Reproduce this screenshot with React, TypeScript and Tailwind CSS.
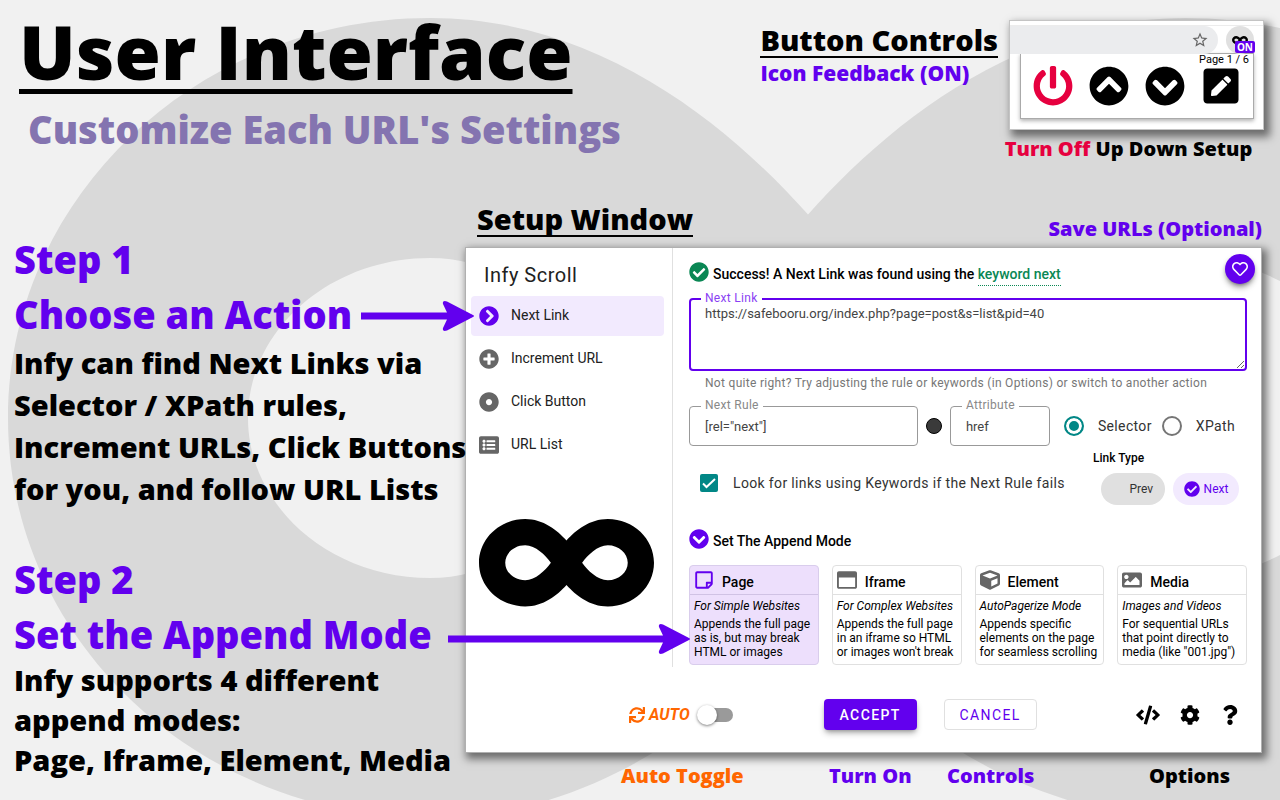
import type { ReactNode } from "react";
import {
  FaCheckCircle,
  FaChevronCircleDown,
  FaChevronCircleRight,
  FaChevronCircleUp,
  FaCode,
  FaCog,
  FaCube,
  FaDotCircle,
  FaImage,
  FaInfinity,
  FaListAlt,
  FaPenSquare,
  FaPlusCircle,
  FaPowerOff,
  FaQuestion,
  FaRegHeart,
  FaRegStickyNote,
  FaRegWindowMaximize,
  FaSync,
} from "react-icons/fa";
import { MdStarBorder } from "react-icons/md";

const INFINITY_PATH =
  "M471.1 96C405 96 353.3 137.3 320 174.6 286.7 137.3 235 96 168.9 96 75.8 96 0 167.8 0 256s75.8 160 168.9 160c66.1 0 117.8-41.3 151.1-78.6 33.3 37.3 85 78.6 151.1 78.6 93.1 0 168.9-71.8 168.9-160S564.2 96 471.1 96zM168.9 320c-40.2 0-72.9-28.7-72.9-64s32.7-64 72.9-64c38.2 0 73.4 36.1 94 64-20.4 27.6-55.9 64-94 64zm302.2 0c-38.2 0-73.4-36.1-94-64 20.4-27.6 55.9-64 94-64 40.2 0 72.9 28.7 72.9 64s-32.7 64-72.9 64z";

function Backdrop() {
  return (
    <svg
      aria-hidden="true"
      className="absolute inset-0 -z-10 h-full w-full"
      viewBox="0 0 1280 800"
      preserveAspectRatio="xMinYMin slice"
    >
      <g transform="translate(8 18) scale(2.5) translate(0 -96)">
        <path d={INFINITY_PATH} fill="#d9d9d9" />
      </g>
    </svg>
  );
}

function ExtensionPopup() {
  return (
    <div className="h-[110px] w-[255px] border border-[#c4c4c4] bg-white pt-1 shadow-[4px_5px_8px_2px_rgba(0,0,0,0.5)]">
      <div className="flex h-7 items-center border-t border-[#ececec]">
        <div className="flex h-7 flex-1 items-center justify-end rounded-r-full bg-[#ebecee] pr-[9px]">
          <MdStarBorder className="size-[18px] text-[#666]" />
        </div>
        <div className="relative mr-[9px] ml-2 flex size-7 items-center justify-center rounded-full bg-[#e0e0e0]">
          <FaInfinity className="size-4" />
          <span className="absolute top-[15px] -right-px z-10 h-3 rounded-xs bg-[#6200ee] px-[2px] font-['Open_Sans',sans-serif] text-[10px] leading-3 font-bold text-white">
            ON
          </span>
        </div>
      </div>
      <div className="mr-[9px] ml-[10px] h-[66px] border border-[#aaa] bg-white shadow-[0_2px_4px_rgba(0,0,0,0.3)]">
        <p className="pr-1 text-right font-['Roboto',sans-serif] text-[11px] leading-3 font-normal">Page 1 / 6</p>
        <div className="flex justify-center gap-4">
          <button type="button" aria-label="Turn off" className="text-[#e6003f]">
            <FaPowerOff className="size-10" />
          </button>
          <button type="button" aria-label="Up">
            <FaChevronCircleUp className="size-10" />
          </button>
          <button type="button" aria-label="Down">
            <FaChevronCircleDown className="size-10" />
          </button>
          <button type="button" aria-label="Setup">
            <FaPenSquare className="size-10" />
          </button>
        </div>
      </div>
    </div>
  );
}

function Arrow({ length, className }: { length: number; className: string }) {
  const tip = length;
  return (
    <svg
      aria-hidden="true"
      className={className}
      viewBox={`0 0 ${length} 32`}
      width={length}
      height={32}
      fill="#6200ee"
    >
      <path
        d={`M0 12.5H${tip - 27}L${tip - 31} 4Q${tip - 32} 0 ${tip - 27} 1.500L${tip - 1} 15Q${tip + 1} 16 ${tip - 1} 17L${tip - 27} 30.500Q${tip - 32} 32 ${tip - 31} 28L${tip - 27} 19.500H0Z`}
      />
    </svg>
  );
}

const actions = [
  { label: "Next Link", icon: FaChevronCircleRight, active: true },
  { label: "Increment URL", icon: FaPlusCircle, active: false },
  { label: "Click Button", icon: FaDotCircle, active: false },
  { label: "URL List", icon: FaListAlt, active: false },
];

const modes = [
  {
    title: "Page",
    icon: FaRegStickyNote,
    subtitle: "For Simple Websites",
    lines: ["Appends the full page", "as is, but may break", "HTML or images"],
    active: true,
  },
  {
    title: "Iframe",
    icon: FaRegWindowMaximize,
    subtitle: "For Complex Websites",
    lines: ["Appends the full page", "in an iframe so HTML", "or images won't break"],
    active: false,
  },
  {
    title: "Element",
    icon: FaCube,
    subtitle: "AutoPagerize Mode",
    lines: ["Appends specific", "elements on the page", "for seamless scrolling"],
    active: false,
  },
  {
    title: "Media",
    icon: FaImage,
    subtitle: "Images and Videos",
    lines: ["For sequential URLs", "that point directly to", 'media (like "001.jpg")'],
    active: false,
  },
];

function Sidebar() {
  return (
    <aside className="w-[207px] shrink-0 border-r border-[#e0e0e0] pt-[11px]">
      <h3 className="pl-[18px] text-xl leading-8 tracking-wide text-[#212121]">Infy Scroll</h3>
      <nav className="mt-[5px] flex flex-col gap-[3px] pr-2 pl-[5px]">
        {actions.map(({ label, icon: Icon, active }) => (
          <a
            key={label}
            href="#action"
            className={
              active
                ? "flex h-10 items-center gap-3 rounded bg-[#f2eafe] pl-2 text-sm text-[#212121]"
                : "flex h-10 items-center gap-3 rounded pl-2 text-sm text-[#212121]"
            }
          >
            <Icon className={active ? "size-5 text-[#6200ee]" : "size-5 text-[#666]"} />
            <span className="pb-[2px]">{label}</span>
          </a>
        ))}
      </nav>
      <svg aria-hidden="true" viewBox="0 96 640 320" className="mt-[54px] ml-[13px] w-[175px]">
        <path d={INFINITY_PATH} />
      </svg>
    </aside>
  );
}

function OutlinedInput({ id, label, value, className }: { id: string; label: string; value: string; className: string }) {
  return (
    <div className={className}>
      <label
        htmlFor={id}
        className="absolute -top-[9px] left-3 bg-white px-1 text-xs leading-4 tracking-wide text-[#888]"
      >
        {label}
      </label>
      <input
        id={id}
        type="text"
        defaultValue={value}
        className="h-10 w-full rounded border border-[#999] px-[15px] text-[13px] text-[#444]"
      />
    </div>
  );
}

function NextLinkForm() {
  return (
    <form id="action" className="min-w-0 flex-1 pr-[14px] pb-[2px] pl-4">
      <div className="flex h-[50px] items-start justify-between">
        <p className="flex items-start gap-1 pt-[14px] text-sm font-medium text-black">
          <FaCheckCircle className="size-5 text-[#0a8754]" />
          <span className="pt-[2px]">
            Success! A Next Link was found using the{" "}
            <a href="#keywords" className="border-b border-dotted border-[#0a8754] pb-[3px] text-[#0a8754]">
              keyword next
            </a>
          </span>
        </p>
        <button
          type="button"
          aria-label="Save URL"
          className="mt-[6px] -mr-2 flex size-[30px] items-center justify-center rounded-full bg-[#6200ee] text-white shadow-md shadow-black/40"
        >
          <FaRegHeart className="size-4" />
        </button>
      </div>

      <div className="relative">
        <label
          htmlFor="next-link"
          className="absolute -top-2 left-3 bg-white px-1 text-xs leading-4 tracking-wide text-[#8a3ff3]"
        >
          Next Link
        </label>
        <textarea
          id="next-link"
          defaultValue="https://safebooru.org/index.php?page=post&s=list&pid=40"
          className="block h-[73px] w-full rounded border-2 border-[#6200ee] px-[14px] pt-[6px] text-[13px] leading-4 text-[#444]"
        />
      </div>
      <p className="pt-1 pl-4 text-xs leading-4 tracking-wide text-[#777]">
        Not quite right? Try adjusting the rule or keywords (in Options) or switch to another action
      </p>

      <div className="mt-[15px] flex items-center">
        <OutlinedInput id="next-rule" label="Next Rule" value={'[rel="next"]'} className="relative min-w-0 flex-1" />
        <span className="mx-2 size-4 shrink-0 rounded-full border border-black bg-[#3a3a3a]" />
        <OutlinedInput id="attribute" label="Attribute" value="href" className="relative w-[100px] shrink-0" />
        <label className="flex items-center gap-[14px] pl-[14px] text-sm tracking-wide text-[#333]">
          <input
            type="radio"
            name="rule-type"
            defaultChecked
            className="size-5 appearance-none rounded-full border-2 border-[#757575] checked:border-[#018786] checked:bg-[#018786] checked:shadow-[inset_0_0_0_3px_white]"
          />
          Selector
        </label>
        <label className="flex items-center gap-[14px] pr-3 pl-[10px] text-sm tracking-wide text-[#333]">
          <input
            type="radio"
            name="rule-type"
            className="size-5 appearance-none rounded-full border-2 border-[#757575] checked:border-[#018786] checked:bg-[#018786] checked:shadow-[inset_0_0_0_3px_white]"
          />
          XPath
        </label>
      </div>

      <div className="mt-1 flex justify-between">
        <label className="mt-[24px] flex h-[18px] items-center gap-[15px] pl-[11px] text-sm tracking-wide text-[#333]">
          <span className="relative flex size-[18px]">
            <input type="checkbox" defaultChecked className="size-[18px] appearance-none rounded-xs bg-[#018786]" />
            <svg aria-hidden="true" viewBox="0 0 18 18" className="absolute inset-0" fill="none">
              <path d="M3 9.500L6.500 13L15 5" stroke="white" strokeWidth="2" />
            </svg>
          </span>
          Look for links using Keywords if the Next Rule fails
        </label>
        <div className="pr-2">
          <p className="-ml-2 text-xs leading-4 font-medium text-black">Link Type</p>
          <div className="mt-[7px] flex gap-2 text-xs">
            <button type="button" className="h-8 w-16 rounded-full bg-[#e0e0e0] pr-3 text-right text-[#333]">
              Prev
            </button>
            <button
              type="button"
              className="flex h-8 w-[66px] items-center justify-center gap-1 rounded-full bg-[#f2eafe] text-[#6200ee]"
            >
              <FaCheckCircle className="size-4" />
              Next
            </button>
          </div>
        </div>
      </div>

      <h4 className="mt-6 flex h-5 items-start gap-1 text-sm font-medium text-black">
        <FaChevronCircleDown className="size-5 text-[#6200ee]" />
        <span className="pt-[2px]">Set The Append Mode</span>
      </h4>

      <div className="mt-4 grid grid-cols-4 gap-[13px]">
        {modes.map(({ title, icon: Icon, subtitle, lines, active }) => (
          <section
            key={title}
            className={
              active
                ? "h-[100px] overflow-hidden rounded border border-[#d9cdec] bg-[#eddffc] text-xs whitespace-nowrap text-black"
                : "h-[100px] overflow-hidden rounded border border-[#e0e0e0] text-xs whitespace-nowrap text-black"
            }
          >
            <h5
              className={
                active
                  ? "flex h-[29px] items-center gap-2 border-b border-[#d0c2e4] pl-1 text-sm font-medium"
                  : "flex h-[29px] items-center gap-2 border-b border-[#e0e0e0] pl-1 text-sm font-medium"
              }
            >
              <Icon className={active ? "size-5 text-[#6200ee]" : "size-5 text-[#666]"} />
              <span className="pt-1">{title}</span>
            </h5>
            <p className="mt-[3px] pl-1 leading-4 italic">{subtitle}</p>
            <p className="mt-[3px] pl-1 leading-[14px]">
              {lines.map((line) => (
                <span key={line} className="block">
                  {line}
                </span>
              ))}
            </p>
          </section>
        ))}
      </div>
    </form>
  );
}

function SetupWindow() {
  return (
    <div className="border border-[#b0b0b0] bg-white font-['Roboto',sans-serif] font-normal shadow-[3px_4px_8px_2px_rgba(0,0,0,0.5)]">
      <div className="flex">
        <Sidebar />
        <NextLinkForm />
      </div>
      <div className="flex h-[85px] items-center pt-[10px] pr-[21px] pl-[163px]">
        <label className="flex items-center text-base font-bold text-[#ff6600] italic">
          <FaSync className="mr-1 size-4" />
          AUTO
          <span className="relative ml-[11px] flex h-[14px] w-8">
            <input
              type="checkbox"
              role="switch"
              className="h-[14px] w-8 appearance-none rounded-full bg-[#9a9a9a] before:absolute before:-top-[3px] before:-left-1 before:size-5 before:rounded-full before:bg-white before:shadow-[0_1px_3px_rgba(0,0,0,0.5)]"
            />
          </span>
        </label>
        <button
          type="button"
          className="ml-[91px] h-[31px] w-[93px] rounded bg-[#6200ee] text-sm font-medium tracking-widest text-white shadow-md shadow-black/30"
        >
          ACCEPT
        </button>
        <button
          type="button"
          className="ml-[27px] h-[31px] w-[93px] rounded border border-[#e0e0e0] text-sm tracking-widest text-[#6200ee]"
        >
          CANCEL
        </button>
        <div className="ml-auto flex items-center gap-5">
          <button type="button" aria-label="Code">
            <FaCode className="size-6" />
          </button>
          <button type="button" aria-label="Settings">
            <FaCog className="size-5" />
          </button>
          <button type="button" aria-label="Help">
            <FaQuestion className="size-5" />
          </button>
        </div>
      </div>
    </div>
  );
}

function StepTitle({ children }: { children: ReactNode }) {
  return <span className="block text-[38px] leading-[55px] whitespace-nowrap">{children}</span>;
}

export default function App() {
  return (
    <main className="relative isolate min-h-screen overflow-hidden bg-[#f1f1f1] font-['Open_Sans',sans-serif] font-extrabold text-black">
      <Backdrop />

      <header className="flex h-[200px] items-start justify-between pr-4 pl-[19px]">
        <div className="whitespace-nowrap">
          <h1 className="text-[75px] leading-[102px] underline decoration-[5px] underline-offset-[9px]">
            User Interface
          </h1>
          <p className="pl-[9px] text-[38px] leading-[54px] text-[#8474b0]">Customize Each URL's Settings</p>
        </div>
        <div className="flex gap-[11px] pt-5">
          <div className="pt-1 whitespace-nowrap">
            <h2 className="border-b-2 border-black text-[29px] leading-8">Button Controls</h2>
            <p className="text-[21px] leading-[30px] text-[#6200ee]">Icon Feedback (ON)</p>
          </div>
          <div>
            <ExtensionPopup />
            <p className="mt-[5px] -ml-4 text-center text-xl leading-7 whitespace-nowrap">
              <span className="text-[#e6003f]">Turn Off</span> Up Down Setup
            </p>
          </div>
        </div>
      </header>

      <div className="flex">
        <div className="relative z-10 w-[465px] shrink-0 pt-8 pl-[14px]">
          <section>
            <h2 className="text-[#6200ee]">
              <StepTitle>Step 1</StepTitle>
              <span className="relative block">
                <StepTitle>Choose an Action</StepTitle>
                <Arrow length={113} className="absolute top-[13px] -right-[9px] z-10" />
              </span>
            </h2>
            <p className="text-[29px] leading-[42px] whitespace-nowrap">
              Infy can find Next Links via
              <br />
              Selector / XPath rules,
              <br />
              Increment URLs, Click Buttons
              <br />
              for you, and follow URL Lists
            </p>
          </section>
          <section className="mt-[42px]">
            <h2 className="text-[#6200ee]">
              <StepTitle>Step 2</StepTitle>
              <span className="relative block">
                <StepTitle>Set the Append Mode</StepTitle>
                <Arrow length={242} className="absolute top-4 -right-[225px] z-10" />
              </span>
            </h2>
            <p className="-mt-0.5 text-[29px] leading-10 whitespace-nowrap">
              Infy supports 4 different
              <br />
              append modes:
              <br />
              Page, Iframe, Element, Media
            </p>
          </section>
        </div>

        <div className="min-w-0 flex-1 pr-[18px]">
          <div className="flex h-[47px] items-start justify-between pl-3">
            <h2 className="mt-[3px] border-b-2 border-black text-[29px] leading-8">Setup Window</h2>
            <p className="mt-[15px] text-xl leading-7 text-[#6200ee]">Save URLs (Optional)</p>
          </div>
          <SetupWindow />
          <div className="flex pt-[9px] pr-8 pl-[156px] text-xl leading-7 text-[#6200ee]">
            <span className="w-[208px] text-[#ff6600]">Auto Toggle</span>
            <span className="w-[118px]">Turn On</span>
            <span>Controls</span>
            <span className="ml-auto text-black">Options</span>
          </div>
        </div>
      </div>
    </main>
  );
}
